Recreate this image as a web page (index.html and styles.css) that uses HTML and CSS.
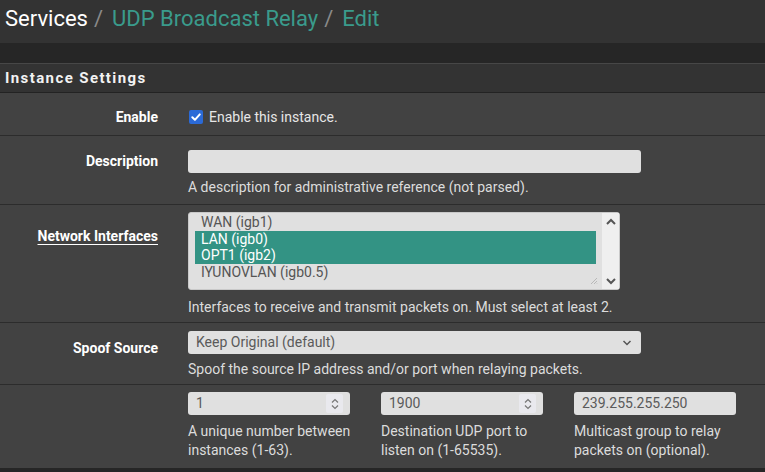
FILE: index.html
```html
<!DOCTYPE html>
<html>
<head>
<meta charset="utf-8">
<link rel="stylesheet" href="styles.css">
</head>
<body>
<div class="title">
  <span class="crumb-plain">Services</span><span class="sep">/</span><span class="crumb-link">UDP Broadcast Relay</span><span class="sep">/</span><span class="crumb-link">Edit</span>
</div>
<div class="band"></div>
<div class="panel">
  <div class="panel-heading">Instance Settings</div>
  <div class="panel-body">
    <div class="row row-enable">
      <div class="label">Enable</div>
      <div class="field">
        <label class="check">
          <span class="checkbox"><svg width="14" height="14" viewBox="0 0 14 14"><path d="M3.3 7.2 L5.9 9.8 L10.8 4.4" fill="none" stroke="#fff" stroke-width="2" stroke-linecap="round" stroke-linejoin="round"/></svg></span>
          <span>Enable this instance.</span>
        </label>
      </div>
    </div>
    <div class="row row-desc">
      <div class="label label-desc">Description</div>
      <div class="field">
        <div class="input wide"></div>
        <div class="help">A description for administrative reference (not parsed).</div>
      </div>
    </div>
    <div class="row row-net">
      <div class="label label-net"><span class="u">Network Interfaces</span></div>
      <div class="field">
        <div class="listbox">
          <div class="options">
            <div class="opt">WAN (igb1)</div>
            <div class="opt sel">LAN (igb0)</div>
            <div class="opt sel">OPT1 (igb2)</div>
            <div class="opt">IYUNOVLAN (igb0.5)</div>
            <svg class="grip" width="8" height="8" viewBox="0 0 8 8"><path d="M7 1 L1 7 M7 4 L4 7 M7 6.5 L6.5 7" stroke="#b8b8b8" stroke-width="1"/></svg>
          </div>
          <div class="scroll">
            <svg width="12" height="10" viewBox="0 0 12 10"><path d="M2 7 L6 3 L10 7" fill="none" stroke="#555" stroke-width="2"/></svg>
            <svg width="12" height="10" viewBox="0 0 12 10"><path d="M2 3 L6 7 L10 3" fill="none" stroke="#555" stroke-width="2"/></svg>
          </div>
        </div>
        <div class="help help-net">Interfaces to receive and transmit packets on. Must select at least 2.</div>
      </div>
    </div>
    <div class="row row-spoof">
      <div class="label label-spoof">Spoof Source</div>
      <div class="field">
        <div class="input wide select"><span>Keep Original (default)</span>
          <svg width="12" height="8" viewBox="0 0 12 8"><path d="M2.5 2 L6 5.5 L9.5 2" fill="none" stroke="#555" stroke-width="1.5"/></svg>
        </div>
        <div class="help help-spoof">Spoof the source IP address and/or port when relaying packets.</div>
      </div>
    </div>
    <div class="row row-last">
      <div class="label"></div>
      <div class="field cols">
        <div class="col">
          <div class="input num"><span>1</span>
            <span class="spin"><svg width="10" height="14" viewBox="0 0 10 14"><path d="M2 5.5 L5 2.5 L8 5.5 M2 8.5 L5 11.5 L8 8.5" fill="none" stroke="#777" stroke-width="1.2"/></svg></span>
          </div>
          <div class="help help-col">A unique number between instances (1-63).</div>
        </div>
        <div class="col">
          <div class="input num"><span>1900</span>
            <span class="spin"><svg width="10" height="14" viewBox="0 0 10 14"><path d="M2 5.5 L5 2.5 L8 5.5 M2 8.5 L5 11.5 L8 8.5" fill="none" stroke="#777" stroke-width="1.2"/></svg></span>
          </div>
          <div class="help help-col">Destination UDP port to listen on (1-65535).</div>
        </div>
        <div class="col">
          <div class="input num"><span>239.255.255.250</span></div>
          <div class="help help-col">Multicast group to relay packets on (optional).</div>
        </div>
      </div>
    </div>
  </div>
</div>
</body>
</html>
```

FILE: styles.css
```css
* { box-sizing: border-box; }
html, body { margin: 0; padding: 0; }
body {
  background: #262626;
  font-family: Roboto, "Liberation Sans", sans-serif;
  color: #fff;
  width: 765px;
  height: 472px;
  overflow: hidden;
}
.title {
  height: 43px;
  background: #333;
  padding: 5px 0 0 5px;
  font-size: 22px;
  line-height: 28px;
  white-space: nowrap;
}
.crumb-plain { color: #fff; }
.crumb-link { color: #3a9b8c; }
.sep { color: #8a8a8a; margin: 0 9px 0 6px; }
.band {
  height: 21px;
  background: #262626;
  border-bottom: 1px solid #474747;
}
.panel-heading {
  height: 29px;
  background: #333;
  border-bottom: 1px solid #232323;
  padding: 5px 0 0 5px;
  font-size: 15px;
  font-weight: bold;
  letter-spacing: 1.4px;
  line-height: 18px;
  color: #f2f2f2;
}
.panel-body { background: #424242; }
.row {
  display: grid;
  grid-template-columns: 188px 1fr;
  border-bottom: 1px solid #2c2c2c;
}
.label {
  text-align: right;
  padding-right: 30px;
  font-size: 14px;
  font-weight: bold;
  color: #fff;
  line-height: 20px;
}
.u { text-decoration: underline; text-underline-offset: 3px; }
.help {
  font-size: 14px;
  line-height: 19px;
  color: #dcdcdc;
}
.input {
  height: 23px;
  background: #e0e0e0;
  border-radius: 3px;
  color: #5a5a5a;
  font-size: 14px;
  line-height: 23px;
  padding: 0 8px;
}
.wide { width: 453px; }

.row-enable { height: 43px; padding-top: 14px; }
.check { display: flex; align-items: center; gap: 6px; font-size: 14px; color: #e6e6e6; line-height: 20px; }
.checkbox {
  width: 14px; height: 14px; margin-left: 1px;
  background: #2b6ad7;
  border-radius: 2px;
  display: block;
}
.checkbox svg { display: block; }

.row-desc { height: 69px; padding-top: 14px; }
.label-desc { padding-top: 1px; }
.row-desc .help { margin-top: 5px; }

.row-net { height: 118px; padding-top: 7px; }
.label-net { padding-top: 14px; }
.listbox {
  width: 432px; height: 78px;
  background: #e0e0e0;
  border: 1px solid #c9c9c9;
  border-radius: 3px;
  display: flex;
}
.options { flex: 1; position: relative; padding: 1px 6px 0 6px; }
.opt {
  height: 16.7px;
  line-height: 16px;
  font-size: 14px;
  color: #555;
  padding-left: 6px;
}
.opt.sel { background: #339384; color: #fff; }
.grip { position: absolute; right: 4px; bottom: 4px; }
.scroll {
  width: 17px;
  background: #efefef;
  display: flex;
  flex-direction: column;
  justify-content: space-between;
  align-items: center;
  padding: 4px 0 3px;
}
.scroll svg { display: block; }
.help-net { margin-top: 8px; }

.row-spoof { height: 62px; padding-top: 8px; }
.label-spoof { padding-top: 7px; }
.select { display: flex; justify-content: space-between; align-items: center; padding-right: 8px; }
.select svg { display: block; }
.help-spoof { margin-top: 6px; }

.row-last { height: 83px; padding-top: 7px; border-bottom: none; }
.cols { display: flex; gap: 31px; }
.col { width: 162px; }
.num { display: flex; justify-content: space-between; align-items: center; padding-right: 7px; }
.spin {
  width: 17px; height: 19px;
  background: #e9e9ee;
  border-radius: 2px;
  display: flex; align-items: center; justify-content: center;
}
.spin svg { display: block; }
.help-col { margin-top: 7px; width: 172px; }
```
